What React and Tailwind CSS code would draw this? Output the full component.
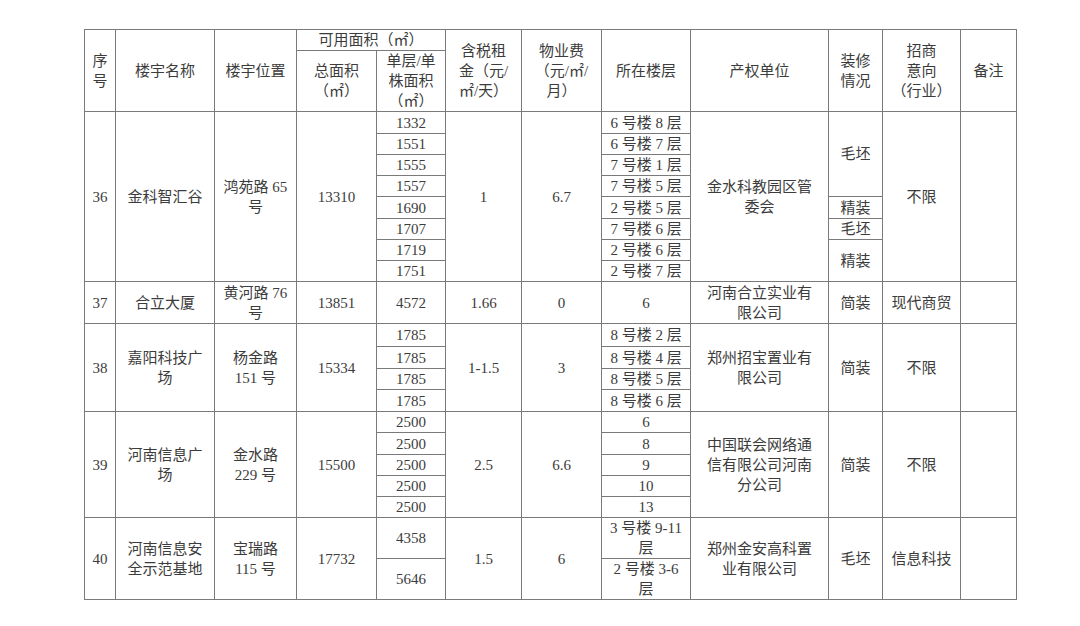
import React from "react";

function Td({ children, rs, cs, className = "" }) {
  return (
    <td
      rowSpan={rs}
      colSpan={cs}
      className={"border border-[#7a7a7a] p-0 text-center align-middle text-[15px] leading-[20px] " + className}
    >
      {children}
    </td>
  );
}

function L({ lines }) {
  return (
    <>
      {lines.map((l, i) => (
        <div key={i}>{l}</div>
      ))}
    </>
  );
}

export default function App() {
  return (
    <div className="w-[1080px] h-[626px] bg-white pl-[84px] pt-[29px] text-[#3c3c3c] font-['Liberation_Serif','Noto_Sans_CJK_SC',serif]">
      <table className="table-fixed border-collapse w-[933px]">
        <colgroup>
          <col className="w-[31px]" />
          <col className="w-[99px]" />
          <col className="w-[82px]" />
          <col className="w-[80px]" />
          <col className="w-[69px]" />
          <col className="w-[76px]" />
          <col className="w-[80px]" />
          <col className="w-[89px]" />
          <col className="w-[138px]" />
          <col className="w-[54px]" />
          <col className="w-[78px]" />
          <col className="w-[56px]" />
        </colgroup>
        <tbody>
          {/* header */}
          <tr className="h-[21px]">
            <Td rs={2}><L lines={["序", "号"]} /></Td>
            <Td rs={2}>楼宇名称</Td>
            <Td rs={2}>楼宇位置</Td>
            <Td cs={2}>可用面积（㎡）</Td>
            <Td rs={2}><L lines={["含税租", "金（元/", "㎡/天）"]} /></Td>
            <Td rs={2}><L lines={["物业费", "（元/㎡/", "月）"]} /></Td>
            <Td rs={2}>所在楼层</Td>
            <Td rs={2}>产权单位</Td>
            <Td rs={2}><L lines={["装修", "情况"]} /></Td>
            <Td rs={2}><L lines={["招商", "意向", "（行业）"]} /></Td>
            <Td rs={2}>备注</Td>
          </tr>
          <tr className="h-[61px]">
            <Td><L lines={["总面积", "（㎡）"]} /></Td>
            <Td><L lines={["单层/单", "株面积", "（㎡）"]} /></Td>
          </tr>

          {/* 36 */}
          <tr className="h-[22px]">
            <Td rs={8}>36</Td>
            <Td rs={8}>金科智汇谷</Td>
            <Td rs={8}><L lines={["鸿苑路 65", "号"]} /></Td>
            <Td rs={8}>13310</Td>
            <Td>1332</Td>
            <Td rs={8}>1</Td>
            <Td rs={8}>6.7</Td>
            <Td>6 号楼 8 层</Td>
            <Td rs={8}><L lines={["金水科教园区管", "委会"]} /></Td>
            <Td rs={4}>毛坯</Td>
            <Td rs={8}>不限</Td>
            <Td rs={8}></Td>
          </tr>
          <tr className="h-[21px]">
            <Td>1551</Td>
            <Td>6 号楼 7 层</Td>
          </tr>
          <tr className="h-[21px]">
            <Td>1555</Td>
            <Td>7 号楼 1 层</Td>
          </tr>
          <tr className="h-[21px]">
            <Td>1557</Td>
            <Td>7 号楼 5 层</Td>
          </tr>
          <tr className="h-[22px]">
            <Td>1690</Td>
            <Td>2 号楼 5 层</Td>
            <Td>精装</Td>
          </tr>
          <tr className="h-[21px]">
            <Td>1707</Td>
            <Td>7 号楼 6 层</Td>
            <Td>毛坯</Td>
          </tr>
          <tr className="h-[21px]">
            <Td>1719</Td>
            <Td>2 号楼 6 层</Td>
            <Td rs={2}>精装</Td>
          </tr>
          <tr className="h-[21px]">
            <Td>1751</Td>
            <Td>2 号楼 7 层</Td>
          </tr>

          {/* 37 */}
          <tr className="h-[42px]">
            <Td>37</Td>
            <Td>合立大厦</Td>
            <Td><L lines={["黄河路 76", "号"]} /></Td>
            <Td>13851</Td>
            <Td>4572</Td>
            <Td>1.66</Td>
            <Td>0</Td>
            <Td>6</Td>
            <Td><L lines={["河南合立实业有", "限公司"]} /></Td>
            <Td>简装</Td>
            <Td>现代商贸</Td>
            <Td></Td>
          </tr>

          {/* 38 */}
          <tr className="h-[23px]">
            <Td rs={4}>38</Td>
            <Td rs={4}><L lines={["嘉阳科技广", "场"]} /></Td>
            <Td rs={4}><L lines={["杨金路", "151 号"]} /></Td>
            <Td rs={4}>15334</Td>
            <Td>1785</Td>
            <Td rs={4}>1-1.5</Td>
            <Td rs={4}>3</Td>
            <Td>8 号楼 2 层</Td>
            <Td rs={4}><L lines={["郑州招宝置业有", "限公司"]} /></Td>
            <Td rs={4}>简装</Td>
            <Td rs={4}>不限</Td>
            <Td rs={4}></Td>
          </tr>
          <tr className="h-[22px]">
            <Td>1785</Td>
            <Td>8 号楼 4 层</Td>
          </tr>
          <tr className="h-[21px]">
            <Td>1785</Td>
            <Td>8 号楼 5 层</Td>
          </tr>
          <tr className="h-[22px]">
            <Td>1785</Td>
            <Td>8 号楼 6 层</Td>
          </tr>

          {/* 39 */}
          <tr className="h-[21px]">
            <Td rs={5}>39</Td>
            <Td rs={5}><L lines={["河南信息广", "场"]} /></Td>
            <Td rs={5}><L lines={["金水路", "229 号"]} /></Td>
            <Td rs={5}>15500</Td>
            <Td>2500</Td>
            <Td rs={5}>2.5</Td>
            <Td rs={5}>6.6</Td>
            <Td>6</Td>
            <Td rs={5}><L lines={["中国联会网络通", "信有限公司河南", "分公司"]} /></Td>
            <Td rs={5}>简装</Td>
            <Td rs={5}>不限</Td>
            <Td rs={5}></Td>
          </tr>
          <tr className="h-[22px]">
            <Td>2500</Td>
            <Td>8</Td>
          </tr>
          <tr className="h-[21px]">
            <Td>2500</Td>
            <Td>9</Td>
          </tr>
          <tr className="h-[21px]">
            <Td>2500</Td>
            <Td>10</Td>
          </tr>
          <tr className="h-[21px]">
            <Td>2500</Td>
            <Td>13</Td>
          </tr>

          {/* 40 */}
          <tr className="h-[41px]">
            <Td rs={2}>40</Td>
            <Td rs={2}><L lines={["河南信息安", "全示范基地"]} /></Td>
            <Td rs={2}><L lines={["宝瑞路", "115 号"]} /></Td>
            <Td rs={2}>17732</Td>
            <Td>4358</Td>
            <Td rs={2}>1.5</Td>
            <Td rs={2}>6</Td>
            <Td><L lines={["3 号楼 9-11", "层"]} /></Td>
            <Td rs={2}><L lines={["郑州金安高科置", "业有限公司"]} /></Td>
            <Td rs={2}>毛坯</Td>
            <Td rs={2}>信息科技</Td>
            <Td rs={2}></Td>
          </tr>
          <tr className="h-[40px]">
            <Td>5646</Td>
            <Td><L lines={["2 号楼 3-6", "层"]} /></Td>
          </tr>
        </tbody>
      </table>
    </div>
  );
}
